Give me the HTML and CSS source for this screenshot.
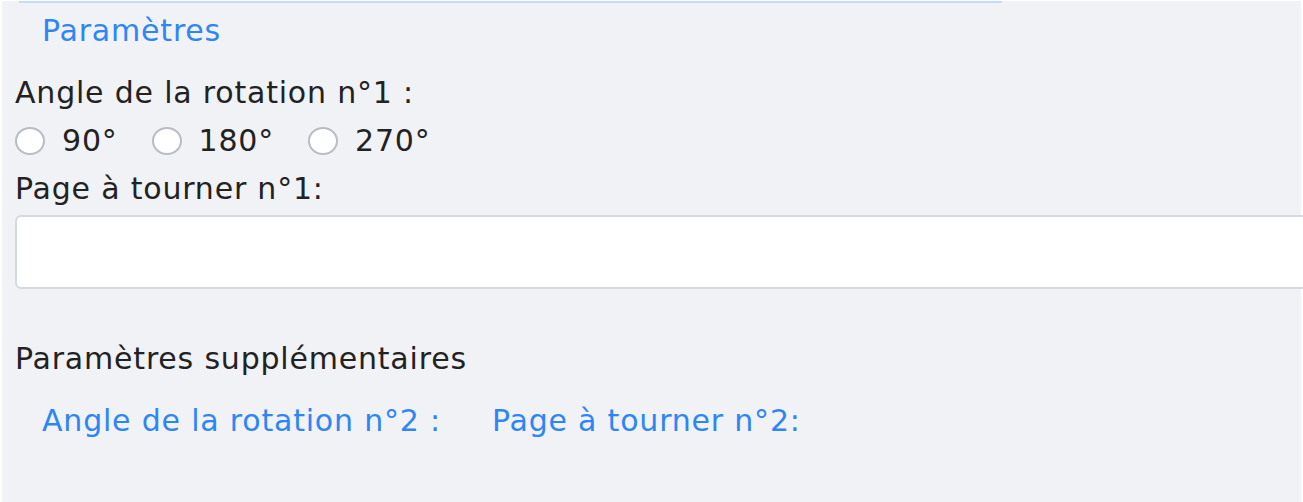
FILE: index.html
```html
<!DOCTYPE html>
<html lang="fr">
<head>
  <meta charset="UTF-8">
  <title>Paramètres</title>
  <link rel="stylesheet" href="styles.css">
</head>
<body>
  <div class="panel">
    <div class="focus-line"></div>

    <!-- Onglet principal -->
    <a class="tab-link" href="#">Paramètres</a>

    <div class="field field-first">
      <div class="label">Angle de la rotation n°1 :</div>
      <div class="radios">
        <label class="radio"><input type="radio" name="angle1"> 90°</label>
        <label class="radio"><input type="radio" name="angle1"> 180°</label>
        <label class="radio"><input type="radio" name="angle1"> 270°</label>
      </div>
    </div>

    <div class="field">
      <div class="label">Page à tourner n°1:</div>
      <input class="text-input" type="text">
    </div>

    <!-- Paramètres supplémentaires -->
    <div class="extra">
      <div class="label">Paramètres supplémentaires</div>
      <div class="extra-links">
        <a class="tab-link" href="#">Angle de la rotation n°2 :</a>
        <a class="tab-link" href="#">Page à tourner n°2:</a>
      </div>
    </div>
  </div>
</body>
</html>
```

FILE: styles.css
```css
* {
  margin: 0;
  padding: 0;
  box-sizing: border-box;
}
html, body {
  width: 100%;
  height: 100%;
  background: #fff;
  overflow: hidden;
}
body {
  font-family: 'DejaVu Sans', sans-serif;
  font-size: 30px;
  letter-spacing: 0.8px;
  color: #222;
}
/* Zone grise */
.panel {
  margin: 1px 2px 0 2px;
  height: 100%;
  background: #f1f2f6;
  padding: 0 0 0 13px;
}
.focus-line {
  height: 2px;
  margin-left: 4px;
  width: 983px;
  background: #c4dbfb;
}
.tab-link {
  color: #2e86f5;
  text-decoration: none;
}
.panel > .tab-link {
  display: block;
  margin-left: 27px;
  line-height: 30px;
  margin-top: 13px;
}
.field-first {
  margin-top: 23px;
}
.label {
  line-height: 48px;
}
.radios {
  display: flex;
  gap: 34px;
  line-height: 48px;
}
.radio {
  display: flex;
  align-items: center;
  gap: 17px;
}
.radio input {
  appearance: none;
  width: 30px;
  height: 28px;
  border: 2px solid #b9bdc3;
  border-radius: 50%;
  background: #fff;
}
.text-input {
  display: block;
  width: 1400px;
  height: 74px;
  border: 2px solid #d5d9df;
  border-radius: 6px;
  background: #fff;
  margin-top: 2px;
}
.extra {
  margin-top: 46px;
}
.extra-links {
  display: flex;
  gap: 51px;
  margin-top: 14px;
  padding-left: 27px;
  line-height: 48px;
}
```
